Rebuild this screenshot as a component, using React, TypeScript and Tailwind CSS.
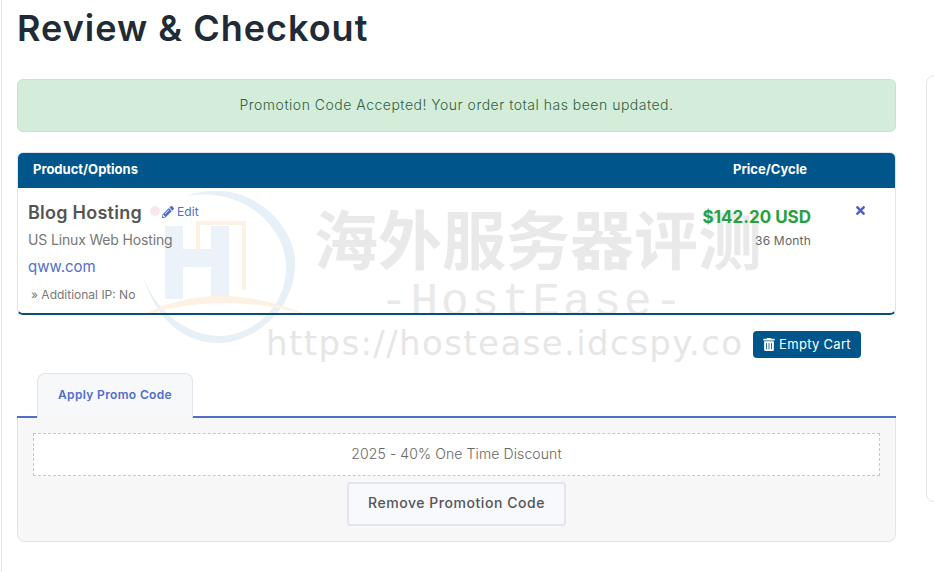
import { FaPencilAlt, FaTimes, FaTrashAlt } from "react-icons/fa"

const poppins = { fontFamily: "Inter, 'Noto Sans', sans-serif" }

function Watermark() {
  return (
    <div className="pointer-events-none absolute left-[136px] top-[186px] h-[180px] w-[640px] text-[#e9e9e9]">
      <span className="absolute left-[12px] top-[20px] h-[10px] w-[10px] rounded-full bg-[#fbe6ea]" />
      <svg className="absolute left-0 top-0" width="175" height="162" viewBox="0 0 175 162" fill="none">
        <path d="M48 10 C110 -12 160 40 157 80 C155 130 110 158 78 157 C50 156 20 140 4 88 C20 130 50 148 80 150 C115 150 150 120 148 78 C146 40 105 0 48 10Z" fill="#e8f0f7" />
        <path d="M60 63 V37 H106 V104" stroke="#fdf1e3" strokeWidth="4" />
        <path d="M36 40 V113 M82 40 V113 M36 72 H82" stroke="#ebf2f9" strokeWidth="18" />
        <path d="M3 130 Q78 90 172 130 Q85 104 3 130Z" fill="#fdf1e3" />
      </svg>
      <div className="absolute left-[176px] top-[12px] whitespace-nowrap text-[64px] font-bold leading-[76px]" style={{ fontFamily: "'Noto Sans CJK SC', sans-serif" }}>
        海外服务器评测
      </div>
      <div className="absolute left-[242px] top-[91px] whitespace-nowrap text-[46px] leading-[52px] tracking-[2.9px]" style={{ fontFamily: "'Liberation Mono', monospace" }}>
        -HostEase-
      </div>
      <div className="absolute left-[128px] top-[134px] whitespace-nowrap text-[34px] leading-[46px] tracking-[1.4px] text-[#e6e6e6]" style={{ fontFamily: "'DejaVu Sans', sans-serif" }}>
        https://hostease.idcspy.co
      </div>
    </div>
  )
}

export default function App() {
  return (
    <div className="relative ml-px flex h-[572px] w-[934px] overflow-hidden border-l border-[#e6e6e6] bg-white" style={poppins}>
      <Watermark />

      <main className="relative ml-[15px] w-[879px] shrink-0">
        <h1 className="mt-[6px] h-[44px] text-[36px] font-semibold leading-[44px] tracking-[1px] text-[#212b36]">Review &amp; Checkout</h1>

        <div className="mt-[29px] flex h-[53px] items-center justify-center rounded-md border border-[#c3e6cb] bg-[#d4edda] pb-[2px] text-[14px] font-light tracking-[0.5px] text-[#2f6140]">
          Promotion Code Accepted! Your order total has been updated.
        </div>

        <section className="mt-[20px] h-[163px] overflow-hidden rounded-md border border-b-2 border-[#dfe3ee] border-b-[#0b4d78]">
          <div className="flex h-[35px] items-center bg-[#00568a] pb-[2px] text-[13px] font-bold text-white">
            <span className="ml-[15px]">Product/Options</span>
            <span className="ml-auto w-[162px]">Price/Cycle</span>
          </div>
          <div className="flex">
            <div className="flex-1 pl-[10px]">
              <div className="mt-[11px] flex h-[26px] items-center">
                <span className="text-[18px] font-semibold tracking-[0.25px] text-[#555]">Blog Hosting</span>
                <a className="ml-[20px] flex items-center gap-[3px] text-[12px] tracking-[0.1px] text-[#4f6fc9]">
                  <FaPencilAlt className="h-[12px] w-[12px]" />
                  Edit
                </a>
              </div>
              <div className="mt-[4px] text-[14px] tracking-[-0.15px] text-[#777]">US Linux Web Hosting</div>
              <div className="mt-[6px] text-[15px] text-[#4f6fc9]">qww.com</div>
              <div className="mt-[7px] ml-[3px] text-[12px] text-[#777]">» Additional IP: No</div>
            </div>
            <div className="w-[150px] pt-[18px] text-right">
              <div className="text-[17px] font-bold leading-[22px] text-[#28a040]">$142.20 USD</div>
              <div className="mt-[4px] text-[12px] tracking-[0.2px] text-[#666]">36 Month</div>
            </div>
            <div className="w-[84px] pl-[43px] pt-[16px]">
              <FaTimes className="h-[13px] w-[13px] text-[#4f5fc9]" />
            </div>
          </div>
        </section>

        <div className="mt-[16px] flex justify-end pr-[35px]">
          <button className="flex h-[27px] w-[108px] items-center justify-center gap-[4px] rounded-[4px] bg-[#00568a] text-[13px] tracking-[0.3px] text-white">
            <FaTrashAlt className="h-[13px] w-[12px]" />
            Empty Cart
          </button>
        </div>

        <div className="mt-[15px] flex h-[45px] border-b-2 border-[#4f6fc9] pl-[20px]">
          <div className="flex h-[45px] w-[156px] items-center justify-center rounded-t-lg border border-b-0 border-[#e2e4ec] bg-[#f7f8fa] pb-[3px] text-[12px] font-semibold tracking-[0.35px] text-[#4f6fc9]">
            Apply Promo Code
          </div>
        </div>
        <div className="flex h-[124px] flex-col items-center rounded-b-lg border border-t-0 border-[#e4e4e4] bg-[#f7f7f8] px-[15px] pt-[15px]">
          <div className="flex h-[43px] w-full items-center justify-center border border-dashed border-[#c8c8c8] bg-white pb-[2px] text-[14px] font-light tracking-[0.1px] text-[#666]">
            2025 - 40% One Time Discount
          </div>
          <button className="mt-[6px] h-[44px] w-[219px] rounded-[4px] border-2 border-[#e2e5ef] bg-[#f8f9fc] pb-[3px] text-[14px] font-medium tracking-[0.55px] text-[#555]">
            Remove Promotion Code
          </button>
        </div>
      </main>

      <aside className="ml-[30px] mt-[75px] h-[427px] w-[40px] shrink-0 rounded-l-lg border border-[#e6e6ea]" />
    </div>
  )
}
